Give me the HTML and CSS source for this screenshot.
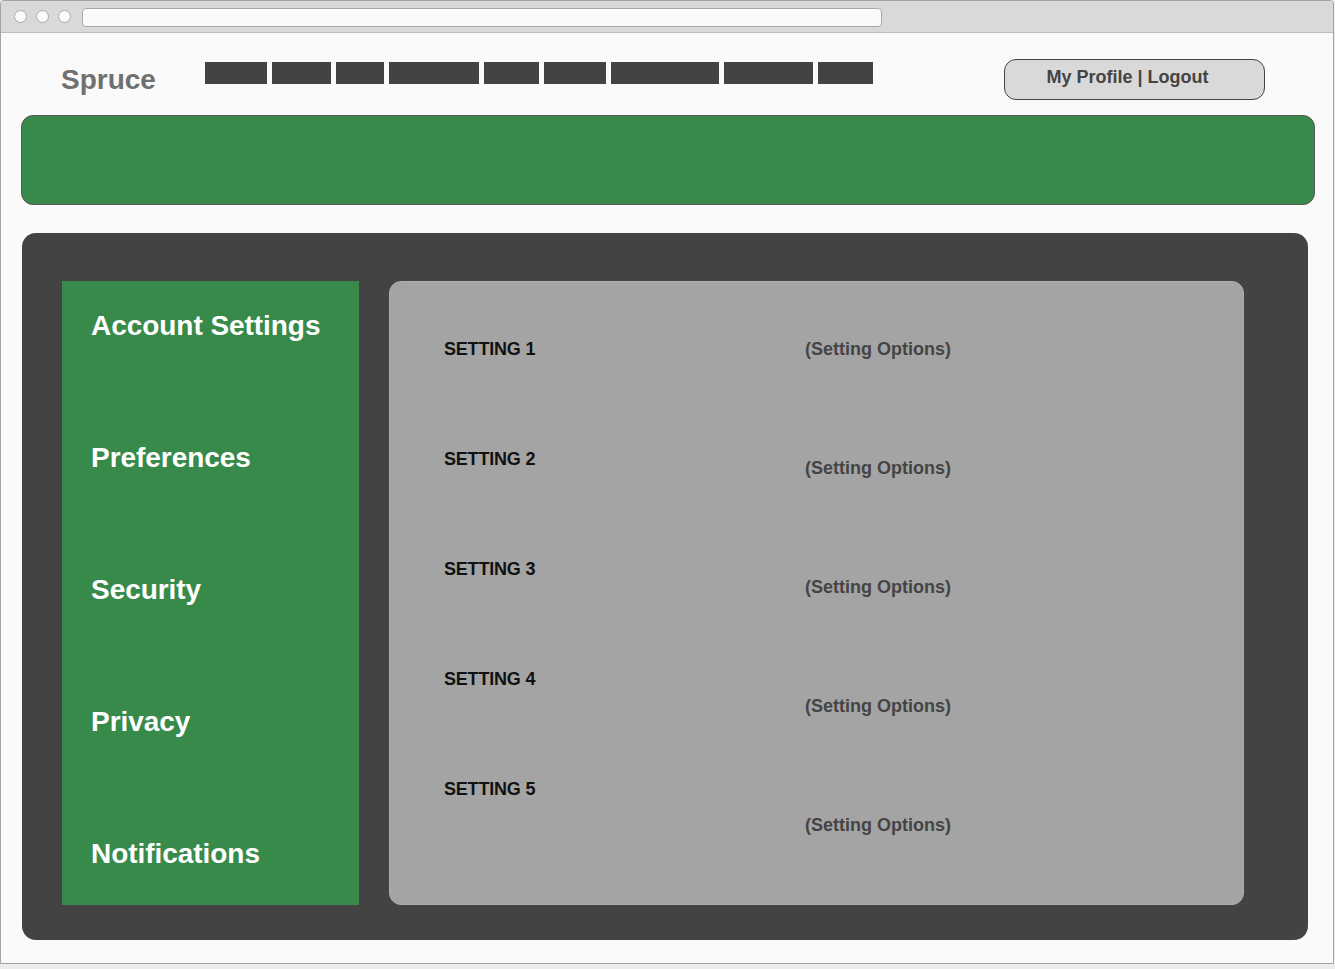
FILE: index.html
```html
<!DOCTYPE html>
<html lang="en">
<head>
<meta charset="utf-8">
<title>Spruce – Account Settings</title>
<link rel="stylesheet" href="styles.css">
</head>
<body>
<div class="window">
  <div class="topbar">
    <span class="dot"></span>
    <span class="dot"></span>
    <span class="dot"></span>
    <div class="address"></div>
  </div>
  <header class="header">
    <div class="logo">Spruce</div>
    <nav class="nav">
      <span class="nav-link"></span>
      <span class="nav-link"></span>
      <span class="nav-link"></span>
      <span class="nav-link"></span>
      <span class="nav-link"></span>
      <span class="nav-link"></span>
      <span class="nav-link"></span>
      <span class="nav-link"></span>
      <span class="nav-link"></span>
    </nav>
    <div class="profile-btn">My Profile | Logout</div>
  </header>
  <div class="banner"></div>
  <main class="panel">
    <aside class="sidebar">
      <div class="side-item">Account Settings</div>
      <div class="side-item">Preferences</div>
      <div class="side-item">Security</div>
      <div class="side-item">Privacy</div>
      <div class="side-item">Notifications</div>
    </aside>
    <section class="content">
      <div class="labels">
        <div class="label">SETTING 1</div>
        <div class="label">SETTING 2</div>
        <div class="label">SETTING 3</div>
        <div class="label">SETTING 4</div>
        <div class="label">SETTING 5</div>
      </div>
      <div class="options">
        <div class="option">(Setting Options)</div>
        <div class="option">(Setting Options)</div>
        <div class="option">(Setting Options)</div>
        <div class="option">(Setting Options)</div>
        <div class="option">(Setting Options)</div>
      </div>
    </section>
  </main>
</div>
</body>
</html>
```

FILE: styles.css
```css
* { box-sizing: border-box; }

html, body {
  margin: 0;
  padding: 0;
}

body {
  background: #ececec;
  font-family: "Liberation Sans", Arial, sans-serif;
  width: 1335px;
  height: 969px;
  overflow: hidden;
}

.window {
  width: 1334px;
  height: 964px;
  background: #fafafa;
  border: 1px solid #a3a3a3;
  border-radius: 4px 4px 0 0;
  overflow: hidden;
}

.topbar {
  height: 32px;
  background: #d9d9d9;
  border-bottom: 1px solid #bcbcbc;
  display: flex;
  align-items: center;
  padding-left: 13px;
}

.dot {
  width: 13px;
  height: 13px;
  border-radius: 50%;
  background: #fafafa;
  border: 1px solid #a9a9a9;
  margin-right: 9px;
}

.dot:nth-child(3) {
  margin-right: 11px;
}

.address {
  width: 800px;
  height: 19px;
  margin-top: 1px;
  background: #fafafa;
  border: 1px solid #a9a9a9;
  border-radius: 4px;
}

.header {
  display: flex;
  align-items: flex-start;
  padding: 26px 68px 0 60px;
  height: 82px;
}

.logo {
  margin-top: 5px;
  font-size: 28px;
  line-height: 32px;
  font-weight: bold;
  color: #707070;
}

.nav {
  display: flex;
  gap: 5px;
  margin-top: 3px;
  margin-left: 49px;
}

.nav-link {
  display: block;
  height: 22px;
  background: #434343;
}

.nav-link:nth-child(1) { width: 62px; }
.nav-link:nth-child(2) { width: 59px; }
.nav-link:nth-child(3) { width: 48px; }
.nav-link:nth-child(4) { width: 90px; }
.nav-link:nth-child(5) { width: 55px; }
.nav-link:nth-child(6) { width: 62px; }
.nav-link:nth-child(7) { width: 108px; }
.nav-link:nth-child(8) { width: 89px; }
.nav-link:nth-child(9) { width: 55px; }

.profile-btn {
  margin-left: auto;
  width: 261px;
  height: 41px;
  background: #d9d9d9;
  border: 1px solid #444;
  border-radius: 12px;
  display: flex;
  align-items: center;
  justify-content: center;
  padding: 0 14px 4px 0;
  font-size: 18px;
  font-weight: bold;
  color: #444;
}

.banner {
  margin: 0 0 0 20px;
  width: 1294px;
  height: 90px;
  background: #388a4b;
  border: 1px solid #555;
  border-radius: 12px;
}

.panel {
  margin: 28px 0 0 21px;
  width: 1286px;
  height: 707px;
  background: #434343;
  border-radius: 14px;
  padding: 48px 64px 35px 40px;
  display: grid;
  grid-template-columns: 297px 855px;
  column-gap: 30px;
}

.sidebar {
  background: #388a4b;
  padding: 29px 0 0 29px;
  display: flex;
  flex-direction: column;
  gap: 100px;
}

.side-item {
  font-size: 28px;
  line-height: 32px;
  font-weight: bold;
  color: #ffffff;
  white-space: nowrap;
  letter-spacing: -0.05px;
}

.content {
  background: #a4a4a4;
  border: 1px solid #adadad;
  border-radius: 12px;
  padding: 57px 0 0 54px;
  display: grid;
  grid-template-columns: 361px 1fr;
  align-content: start;
}

.labels {
  display: flex;
  flex-direction: column;
  gap: 90px;
}

.label {
  font-size: 18px;
  line-height: 20px;
  font-weight: bold;
  color: #111;
  white-space: nowrap;
  letter-spacing: -0.2px;
}

.options {
  display: flex;
  flex-direction: column;
  gap: 99px;
}

.option {
  font-size: 18px;
  line-height: 20px;
  font-weight: bold;
  color: #444;
  white-space: nowrap;
}
```
